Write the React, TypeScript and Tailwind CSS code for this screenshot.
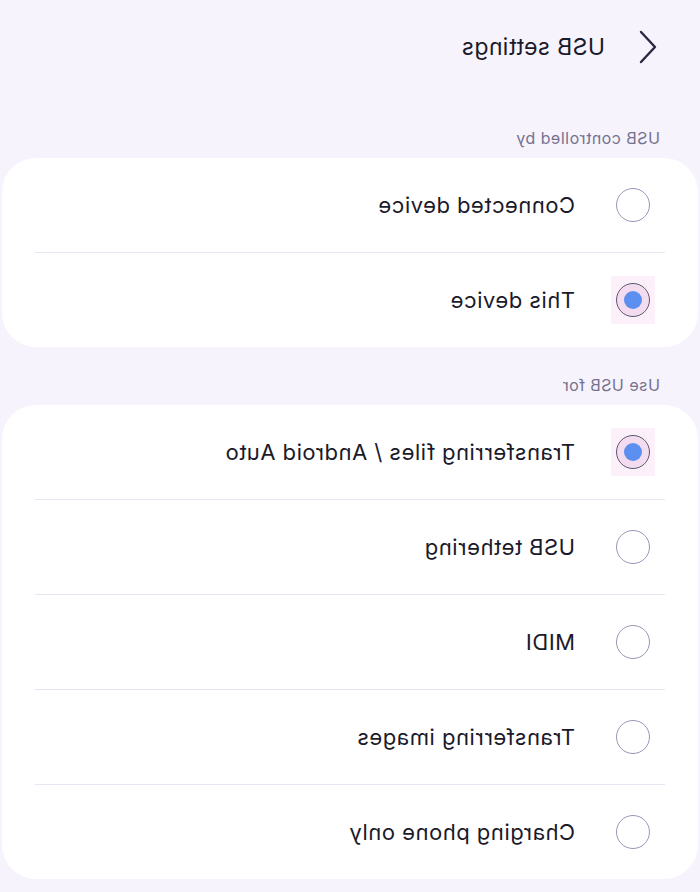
const controlledBy = [
  { label: 'Connected device', checked: false },
  { label: 'This device', checked: true },
];

const useFor = [
  { label: 'Transferring files / Android Auto', checked: true },
  { label: 'USB tethering', checked: false },
  { label: 'MIDI', checked: false },
  { label: 'Transferring images', checked: false },
  { label: 'Charging phone only', checked: false },
];

function Radio({ checked }: { checked: boolean }) {
  if (checked) {
    return (
      <div className="flex h-[48px] w-[44px] items-center justify-center bg-[#fcf0fa]">
        <div className="flex h-[34px] w-[34px] items-center justify-center rounded-full border-[1.5px] border-[#5c5870] bg-[#f3dcf0]">
          <div className="h-[18px] w-[18px] rounded-full bg-[#5b8ff0]" />
        </div>
      </div>
    );
  }
  return (
    <div className="flex h-[48px] w-[44px] items-center justify-center">
      <div className="h-[34px] w-[34px] rounded-full border-[1.5px] border-[#9a95b8]" />
    </div>
  );
}

function Option({ label, checked, last }: { label: string; checked: boolean; last: boolean }) {
  return (
    <div className="flex flex-col">
      <div className="flex h-[94px] items-center gap-[36px] pl-[43px]">
        <Radio checked={checked} />
        <span className="text-[22px] leading-none tracking-[0.5px] text-[#1b1a2a]">{label}</span>
      </div>
      {!last && <div className="mx-[33px] h-px bg-[#e9e6f4]" />}
    </div>
  );
}

function Section({ title, items, top }: { title: string; items: { label: string; checked: boolean }[]; top: string }) {
  return (
    <section className="flex flex-col">
      <div className={`flex items-end pb-[10px] pl-[40px] ${top}`}>
        <span className="text-[16px] leading-[20px] tracking-[0.5px] text-[#75728f]">{title}</span>
      </div>
      <div className="mx-[2px] flex flex-col rounded-[34px] bg-white">
        {items.map((item, i) => (
          <Option key={item.label} label={item.label} checked={item.checked} last={i === items.length - 1} />
        ))}
      </div>
    </section>
  );
}

export default function App() {
  return (
    <div className="h-[892px] w-[700px] overflow-hidden bg-[#f6f3fd] font-['Inter',_'Noto_Sans',_sans-serif] [transform:scaleX(-1)]">
      <header className="flex h-[92px] items-center gap-[33px] pl-[42px] pt-[2px]">
        <svg width="20" height="34" viewBox="0 0 20 34" fill="none">
          <path d="M17 2 L3 17 L17 32" stroke="#2a2840" strokeWidth="2.4" strokeLinecap="round" strokeLinejoin="round" />
        </svg>
        <h1 className="text-[23px] leading-none tracking-[0.4px] text-[#1b1a2a]">USB settings</h1>
      </header>
      <Section title="USB controlled by" items={controlledBy} top="pt-[36px]" />
      <Section title="Use USB for" items={useFor} top="pt-[28px]" />
    </div>
  );
}
